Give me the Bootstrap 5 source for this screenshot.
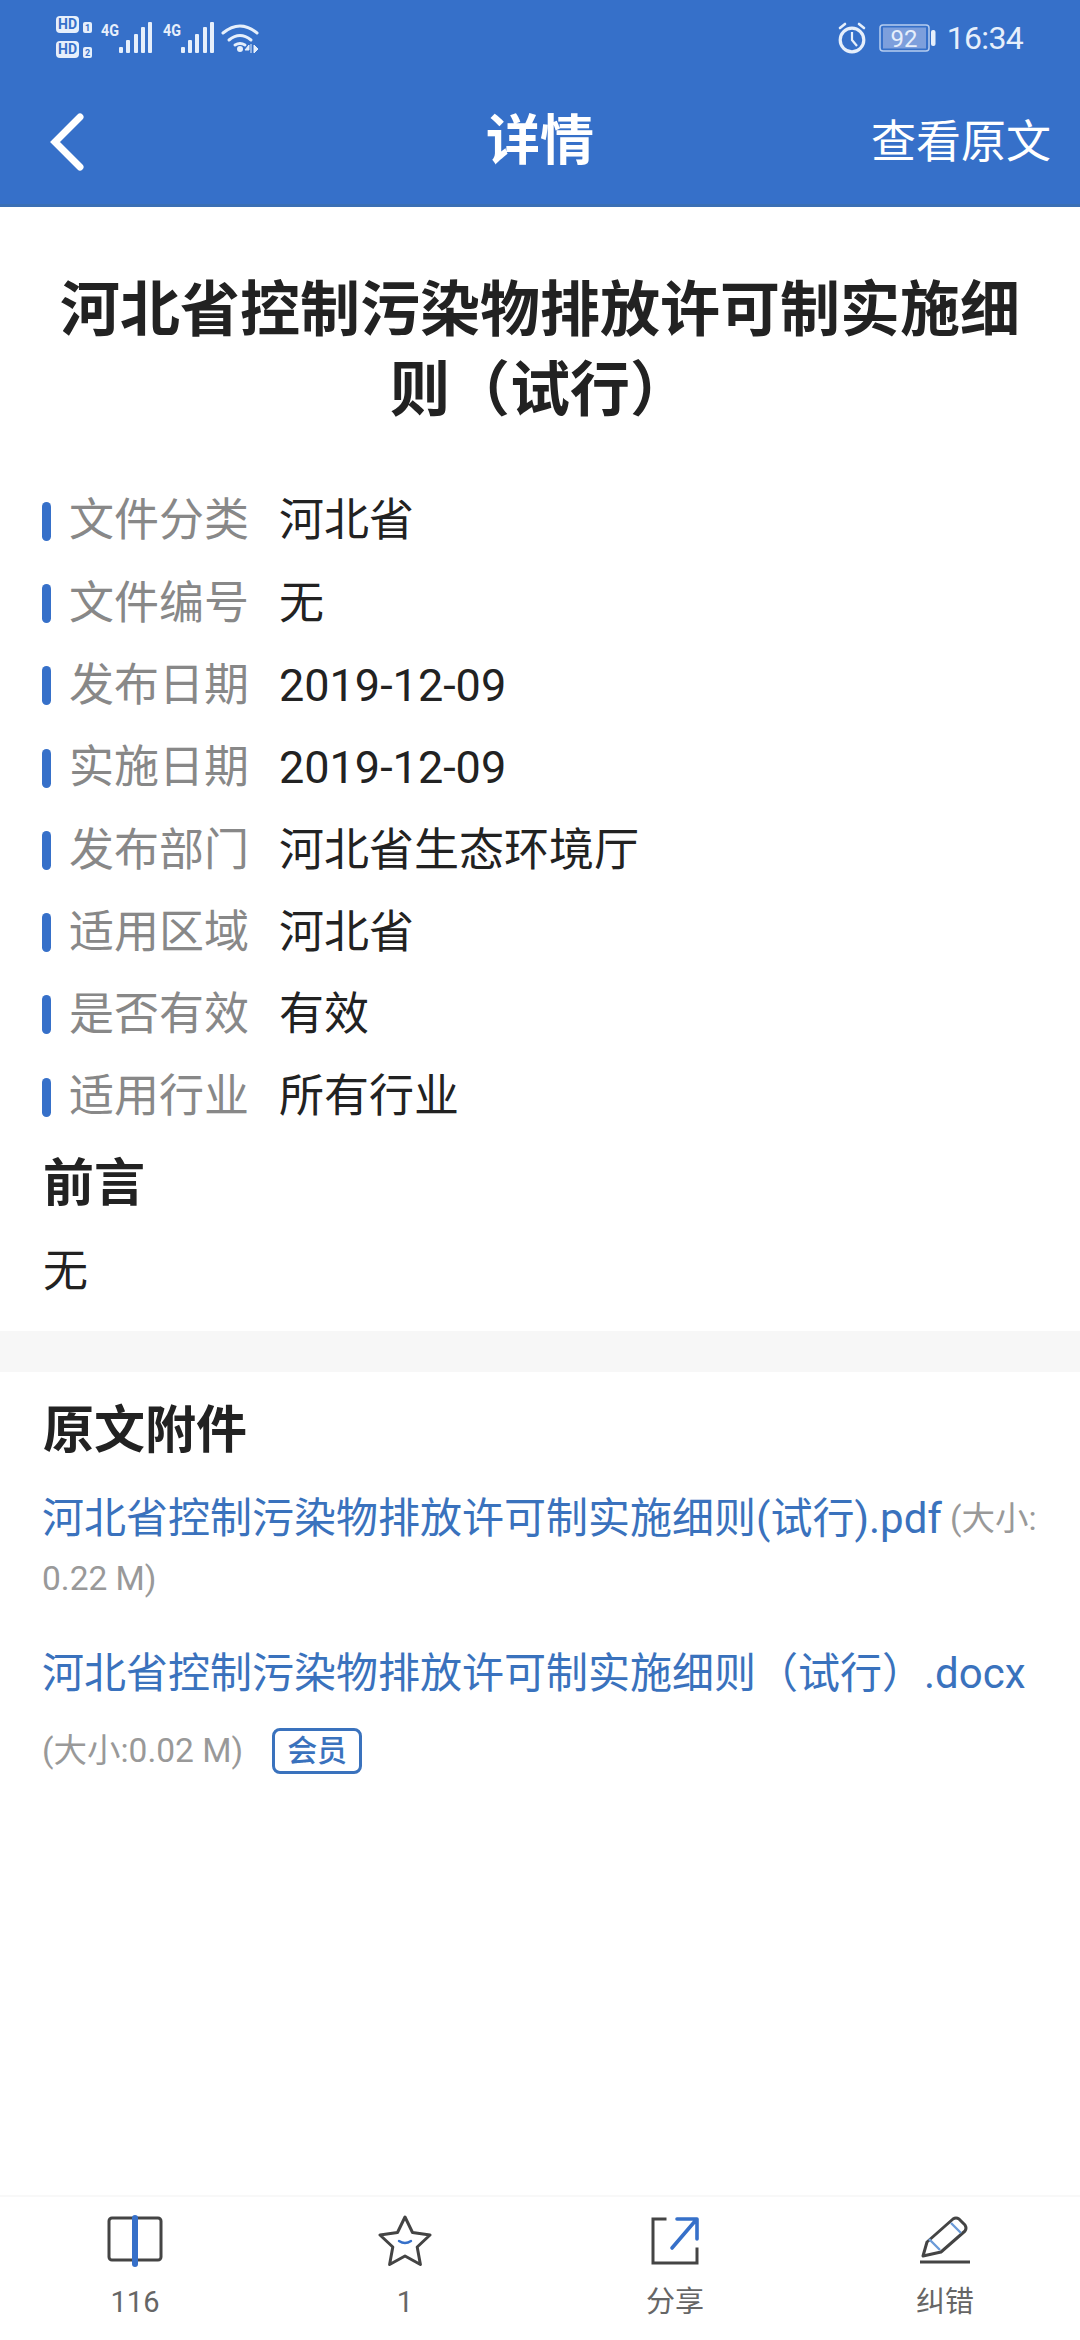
<!doctype html>
<html lang="zh-CN">
<head>
<meta charset="utf-8">
<title>详情</title>
<link rel="stylesheet" href="https://cdn.jsdelivr.net/npm/bootstrap@5.3.0/dist/css/bootstrap.min.css">
<style>
html,body{background:#fff;}
body{font-family:Roboto,"Noto Sans CJK SC",sans-serif;color:#222;}
.app-root{width:1080px;height:2340px;overflow:hidden;}
.app-head{background:#3670c9;color:#fff;height:207px;border-bottom:3px solid #3a6fb5;}
.status-row{height:68px;padding:0 57px 0 54px;color:#e6effb;}
.status-right{padding-top:8px;}
.status-clock{font-size:32px;letter-spacing:-.7px;line-height:1;}
.alarm-icon{margin-right:12px;}
.batt-icon{margin-right:11px;}
.nav-row{height:136px;padding:12px 29px 0;}
.nav-side{flex:1 1 0;}
.back-icon{margin-left:21px;}
.nav-title{font-size:54px;font-weight:700;line-height:1;}
.nav-link-text{font-size:45px;line-height:1;}
.doc-title{font-size:60px;font-weight:700;line-height:80px;text-align:center;margin:0;padding:64px 45px 0;color:#222;}
.meta-list{padding:49px 0 0 42px;margin:0;list-style:none;}
.meta-item{height:82.3px;font-size:45px;}
.meta-bar{width:9px;height:39px;border-radius:5px;background:#3670c9;margin-right:18px;flex:none;}
.meta-label{width:210px;color:#888;flex:none;}
.meta-value{color:#222;}
.sect-head{font-weight:700;color:#222;margin:0;line-height:1.2;}
.sect-preface{font-size:51px;padding:0 43px;margin-top:15px;}
.preface-body{font-size:45px;line-height:1;padding:0 43px;margin:34px 0 0;}
.gray-band{height:41px;background:#f7f7f7;margin-top:37px;}
.sect-files{font-size:51px;padding:28px 43px 0;}
.file-block{padding:0 42px;margin-top:28px;}
.file-block + .file-block{margin-top:35px;}
.file-row{height:60px;white-space:nowrap;overflow:hidden;}
.file-name{font-size:42px;color:#3a72bd;}
.file-size{font-size:33.5px;color:#999;}
.file-gap{margin-top:17px;}
.vip-tag{width:90px;height:46px;border:3px solid #3a72bd;border-radius:8px;color:#3a72bd;font-size:30px;font-weight:500;line-height:1;margin-left:29px;}
.bottom-bar{height:145px;border-top:2px solid #f8f8f8;}
.bar-item{flex:1 1 0;color:#666;font-size:29px;line-height:1;padding-top:18px;}
.bar-item svg{display:block;margin-bottom:21px;}
</style>
</head>
<body>
<div class="app-root d-flex flex-column">
  <header class="app-head flex-none">
    <div class="status-row d-flex align-items-center justify-content-between">
      <svg width="210" height="50" viewBox="0 0 210 50" fill="none" aria-hidden="true">
        <rect x="2" y="7" width="23" height="17" rx="4" fill="#e6effb"/><text x="13.500" y="20" text-anchor="middle" font-family="Roboto" font-size="14" font-weight="700" fill="#3670c9">HD</text>
        <rect x="29" y="13" width="9" height="11" rx="2" fill="#e6effb"/><text x="33.500" y="22" text-anchor="middle" font-family="Roboto" font-size="9" font-weight="700" fill="#3670c9">1</text>
        <rect x="2" y="32" width="23" height="17" rx="4" fill="#e6effb"/><text x="13.500" y="45" text-anchor="middle" font-family="Roboto" font-size="14" font-weight="700" fill="#3670c9">HD</text>
        <rect x="29" y="38" width="9" height="11" rx="2" fill="#e6effb"/><text x="33.500" y="47" text-anchor="middle" font-family="Roboto" font-size="9" font-weight="700" fill="#3670c9">2</text>
        <text x="47" y="27" font-family="Roboto" font-size="17" font-weight="700" fill="#e6effb" textLength="18" lengthAdjust="spacingAndGlyphs">4G</text>
        <g fill="#e6effb"><rect x="65" y="38" width="4" height="6" rx="1"/><rect x="72" y="31" width="4" height="13" rx="1"/><rect x="80" y="25" width="4" height="19" rx="1"/><rect x="87" y="18" width="4" height="26" rx="1"/><rect x="94" y="13" width="4" height="31" rx="1"/></g>
        <text x="109" y="27" font-family="Roboto" font-size="17" font-weight="700" fill="#e6effb" textLength="18" lengthAdjust="spacingAndGlyphs">4G</text>
        <g fill="#e6effb"><rect x="127" y="38" width="4" height="6" rx="1"/><rect x="134" y="31" width="4" height="13" rx="1"/><rect x="141" y="25" width="4" height="19" rx="1"/><rect x="149" y="18" width="4" height="26" rx="1"/><rect x="156" y="13" width="4" height="31" rx="1"/></g>
        <g stroke="#e6effb" stroke-width="3" stroke-linecap="round"><path d="M169 24q17-14 34 0"/><path d="M175 31q11-9 22 0"/><path d="M181 36q5-3 10 0"/></g>
        <circle cx="186" cy="40" r="3" fill="#e6effb"/>
        <path d="M195 36l-4 5h4zM197 35v9M200 36l4 4-4 4z" fill="#e6effb" stroke="#e6effb" stroke-width="1"/>
      </svg>
      <div class="status-right d-flex align-items-center">
        <svg class="alarm-icon" width="30" height="32" viewBox="0 0 30 32" fill="none" stroke="#e6effb" aria-hidden="true">
          <circle cx="15" cy="18" r="11.800" stroke-width="3.200"/><path d="M15 10v8l5 6" stroke-width="2.200"/>
          <path d="M3 6l5-4M27 6l-5-4" stroke-width="2.600" stroke-linecap="round"/>
        </svg>
        <svg class="batt-icon" width="57" height="30" viewBox="0 0 57 30" aria-hidden="true">
          <rect x="1" y="2" width="49" height="26" rx="3" fill="none" stroke="#b6cdf0" stroke-width="1.500"/>
          <rect x="4" y="4.500" width="43" height="21" fill="#7d9fdc"/>
          <text x="25" y="23.500" text-anchor="middle" font-family="Roboto" font-size="24" fill="#e6effb">92</text>
          <rect x="52" y="7" width="4.500" height="16" rx="2" fill="#e6effb"/>
        </svg>
        <span class="status-clock">16:34</span>
      </div>
    </div>
    <nav class="nav-row d-flex align-items-center">
      <div class="nav-side">
        <svg class="back-icon d-block" width="38" height="60" viewBox="0 0 38 60" fill="none" stroke="#fff" stroke-width="7" stroke-linecap="round" aria-hidden="true"><path d="M30 5 5 30l25 25"/></svg>
      </div>
      <div class="nav-title">详情</div>
      <div class="nav-side text-end nav-link-text">查看原文</div>
    </nav>
  </header>

  <main class="flex-grow-1">
    <h1 class="doc-title">河北省控制污染物排放许可制实施细则（试行）</h1>
    <ul class="meta-list">
      <li class="meta-item d-flex align-items-center"><span class="meta-bar"></span><span class="meta-label">文件分类</span><span class="meta-value">河北省</span></li>
      <li class="meta-item d-flex align-items-center"><span class="meta-bar"></span><span class="meta-label">文件编号</span><span class="meta-value">无</span></li>
      <li class="meta-item d-flex align-items-center"><span class="meta-bar"></span><span class="meta-label">发布日期</span><span class="meta-value">2019-12-09</span></li>
      <li class="meta-item d-flex align-items-center"><span class="meta-bar"></span><span class="meta-label">实施日期</span><span class="meta-value">2019-12-09</span></li>
      <li class="meta-item d-flex align-items-center"><span class="meta-bar"></span><span class="meta-label">发布部门</span><span class="meta-value">河北省生态环境厅</span></li>
      <li class="meta-item d-flex align-items-center"><span class="meta-bar"></span><span class="meta-label">适用区域</span><span class="meta-value">河北省</span></li>
      <li class="meta-item d-flex align-items-center"><span class="meta-bar"></span><span class="meta-label">是否有效</span><span class="meta-value">有效</span></li>
      <li class="meta-item d-flex align-items-center"><span class="meta-bar"></span><span class="meta-label">适用行业</span><span class="meta-value">所有行业</span></li>
    </ul>
    <h2 class="sect-head sect-preface">前言</h2>
    <p class="preface-body">无</p>
    <div class="gray-band"></div>
    <h2 class="sect-head sect-files">原文附件</h2>
    <div class="file-block">
      <div class="file-row d-flex align-items-center"><span class="file-name">河北省控制污染物排放许可制实施细则(试行).pdf</span><span class="file-size ms-2">(大小:</span></div>
      <div class="file-row d-flex align-items-center"><span class="file-size">0.22 M)</span></div>
    </div>
    <div class="file-block">
      <div class="file-row d-flex align-items-center"><span class="file-name">河北省控制污染物排放许可制实施细则（试行）.docx</span></div>
      <div class="file-row file-gap d-flex align-items-center"><span class="file-size">(大小:0.02 M)</span><span class="vip-tag d-inline-flex align-items-center justify-content-center">会员</span></div>
    </div>
  </main>

  <footer class="bottom-bar d-flex flex-none">
    <div class="bar-item d-flex flex-column align-items-center">
      <svg width="56" height="52" viewBox="0 0 56 52" fill="none" aria-hidden="true"><rect x="2" y="3" width="52" height="42" rx="3" stroke="#444" stroke-width="3"/><path d="M28 3v46" stroke="#3670c9" stroke-width="6" stroke-linecap="round"/></svg>
      <span>116</span>
    </div>
    <div class="bar-item d-flex flex-column align-items-center">
      <svg width="56" height="52" viewBox="0 0 56 52" fill="none" aria-hidden="true"><path d="M28 2l7.500 15.500 17.500 2.500-12.800 12 3.200 17.500L28 41l-15.400 8.500 3.200-17.500L3 20l17.500-2.500z" stroke="#444" stroke-width="3" stroke-linejoin="round"/><path d="M22 26q6 4 12 0" stroke="#3670c9" stroke-width="2.400" stroke-linecap="round"/></svg>
      <span>1</span>
    </div>
    <div class="bar-item d-flex flex-column align-items-center">
      <svg width="56" height="52" viewBox="0 0 56 52" fill="none" aria-hidden="true"><path d="M18 4H6v44h44V34" stroke="#444" stroke-width="3" stroke-linecap="square"/><path d="M30 4h20v20M49 5 25 33" stroke="#3670c9" stroke-width="3.600" stroke-linecap="round" stroke-linejoin="round"/></svg>
      <span>分享</span>
    </div>
    <div class="bar-item d-flex flex-column align-items-center">
      <svg width="56" height="52" viewBox="0 0 56 52" fill="none" aria-hidden="true"><path d="M6 41l4-14L36 4q3-2 6 0l6 6q2 3 0 6L24 37z" stroke="#444" stroke-width="3" stroke-linejoin="round"/><path d="M12 24l11 11M34 8l10 10" stroke="#6b9bd8" stroke-width="2.400"/><path d="M3 47h50" stroke="#444" stroke-width="3"/></svg>
      <span>纠错</span>
    </div>
  </footer>
</div>
<script src="https://cdn.jsdelivr.net/npm/bootstrap@5.3.0/dist/js/bootstrap.bundle.min.js"></script>
</body>
</html>
